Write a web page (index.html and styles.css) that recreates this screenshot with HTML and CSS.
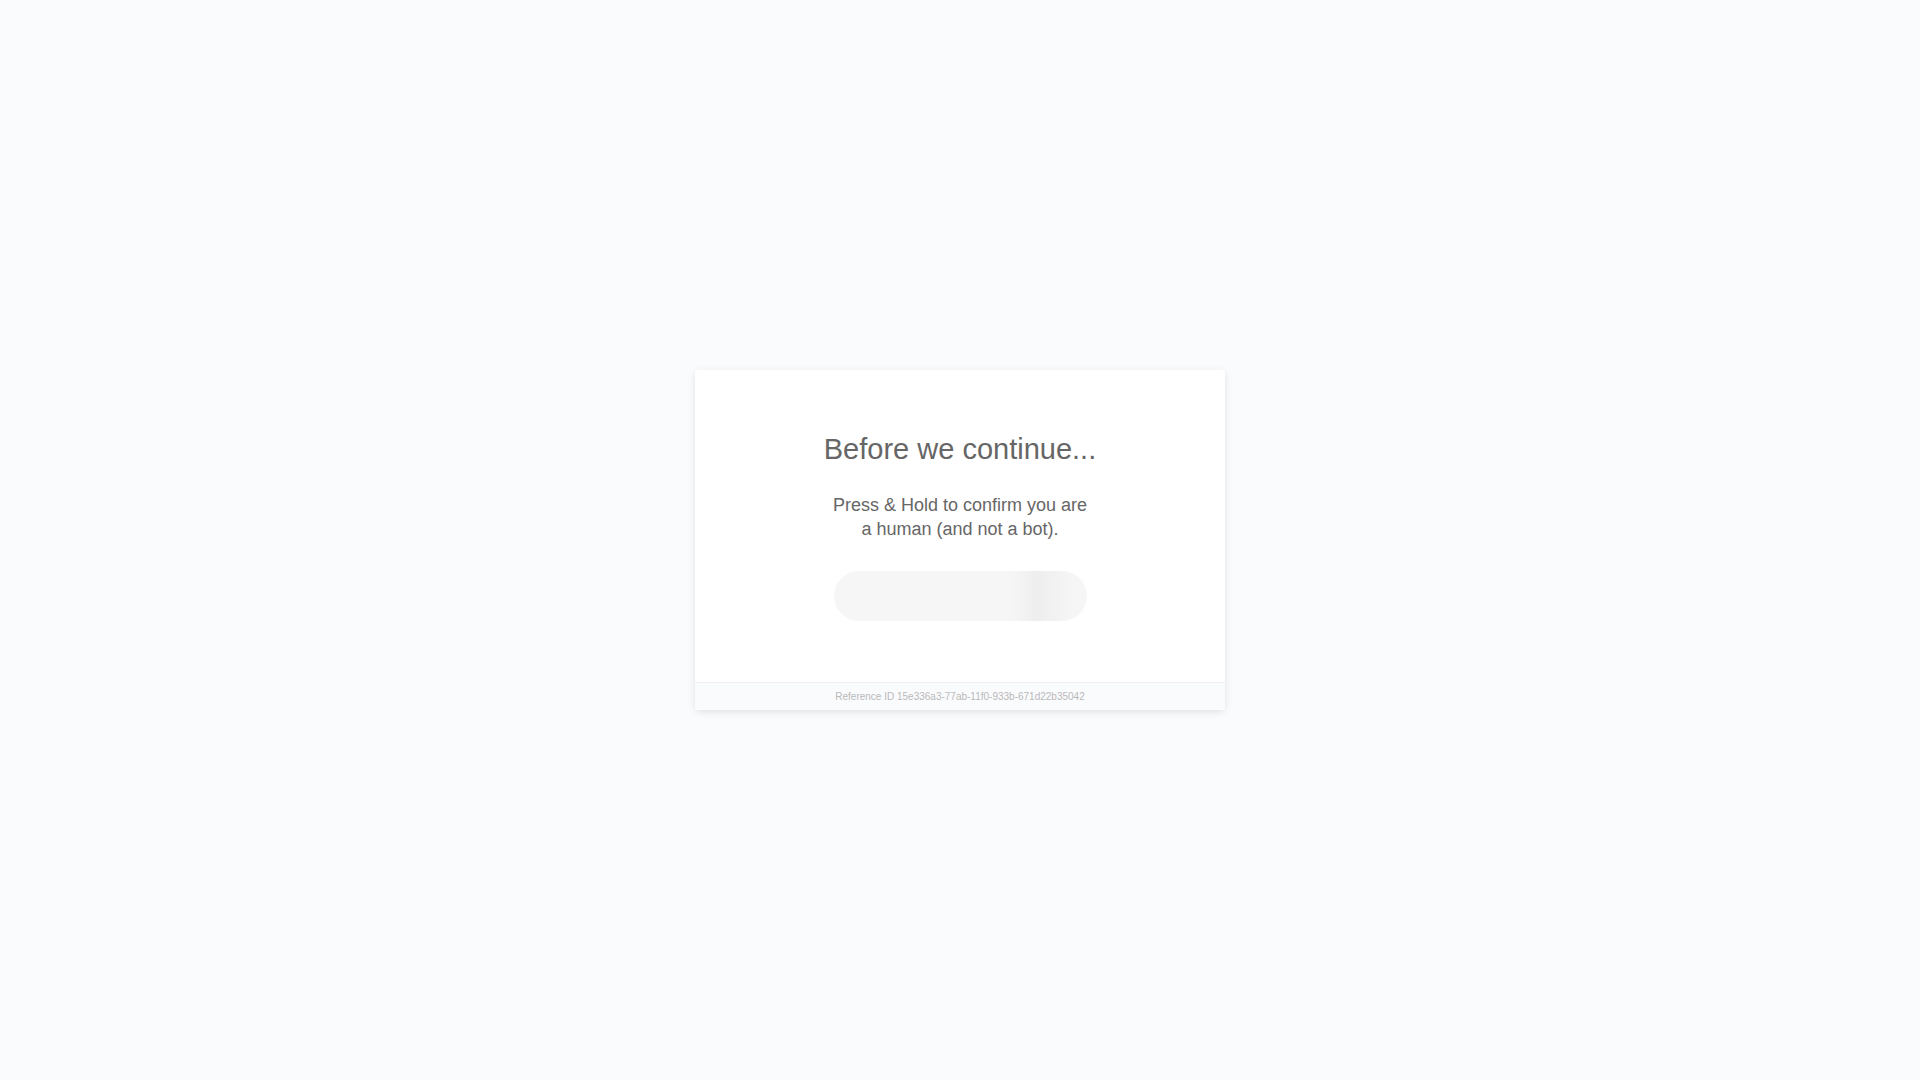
FILE: index.html
```html
<!DOCTYPE html>
<html lang="en">
<head>
  <meta charset="utf-8">
  <meta name="viewport" content="width=device-width, initial-scale=1">
  <title>Before we continue...</title>
  <link rel="stylesheet" href="styles.css">
</head>
<body>
  <main class="card">
    <section class="content">
      <h1 class="title">Before we continue...</h1>
      <p class="message">Press &amp; Hold to confirm you are<br>a human (and not a bot).</p>
      <div class="loader"></div>
    </section>
    <footer class="reference">Reference ID 15e336a3-77ab-11f0-933b-671d22b35042</footer>
  </main>
</body>
</html>
```

FILE: styles.css
```css
* {
  box-sizing: border-box;
}

body {
  display: flex;
  align-items: center;
  justify-content: center;
  min-height: 100vh;
  margin: 0;
  background: #fafbfd;
  color: #666;
  font-family: "Liberation Sans", Arial, sans-serif;
}

.card {
  width: 100%;
  max-width: 530px;
  overflow: hidden;
  border-radius: 2px;
  background: #fff;
  box-shadow: 0 2px 9px -1px rgba(0, 0, 0, 0.13);
  text-align: center;
}

.content {
  display: flex;
  flex-direction: column;
  align-items: center;
  padding: 61px 20px;
}

.title {
  margin: 0 0 26px;
  font-size: 29px;
  font-weight: 400;
  line-height: 36px;
}

.message {
  margin: 0 0 30px;
  font-size: 18px;
  line-height: 24px;
}

.loader {
  width: 253px;
  max-width: 100%;
  height: 50px;
  border-radius: 25px;
  background: linear-gradient(to right, #f6f6f6 70%, #eee 80%, #f6f6f6 95%);
}

.reference {
  border-top: 1px solid #f0eeee;
  background: #fafbfd;
  color: #b9b9b9;
  font-size: 10px;
  line-height: 27px;
}
```
